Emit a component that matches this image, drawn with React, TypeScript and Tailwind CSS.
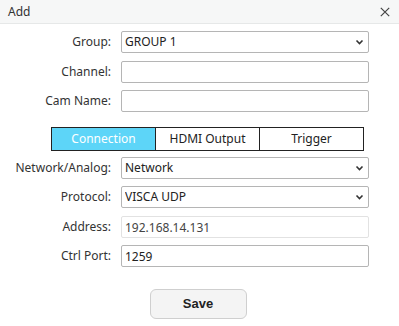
import { useState } from 'react';

const font = { fontFamily: '"Noto Sans", "Open Sans", sans-serif' };

function Chevron() {
  return (
    <svg
      className="pointer-events-none absolute right-[5px] top-1/2 -translate-y-1/2"
      width="9"
      height="6"
      viewBox="0 0 9 6"
    >
      <path d="M1.5 1.5 L4.5 4.5 L7.5 1.5" fill="none" stroke="#333" strokeWidth="1.6" />
    </svg>
  );
}

function Row({ label, children, className = '' }: { label: string; children: React.ReactNode; className?: string }) {
  return (
    <div className={`flex items-center ${className}`}>
      <label className="w-[111px] text-right text-[12px] text-[#333]">{label}</label>
      <div className="relative ml-[10px] w-[248px]">{children}</div>
    </div>
  );
}

const boxCls =
  'block h-[22px] w-full rounded-[2px] border border-[#b5b5b5] bg-white px-[3px] text-[12px] text-[#222] outline-none';

export default function App() {
  const [tab, setTab] = useState('Connection');
  const tabs = ['Connection', 'HDMI Output', 'Trigger'];

  return (
    <div className="h-[326px] w-[399px] bg-white" style={font}>
      {/* Title bar */}
      <div className="flex h-[24px] items-center justify-between border-b border-[#e6e8e8] bg-[#f6f7f7] pl-[8px] pr-[9px]">
        <span className="text-[12px] text-[#333]">Add</span>
        <svg width="10" height="10" viewBox="0 0 10 10">
          <path d="M0.8 0.8 L9.2 9.2 M9.2 0.8 L0.8 9.2" stroke="#444" strokeWidth="1.2" />
        </svg>
      </div>

      <div className="flex flex-col">
        <Row label="Group:" className="mt-[7px]">
          <select className={`${boxCls} appearance-none`} defaultValue="GROUP 1">
            <option>GROUP 1</option>
          </select>
          <Chevron />
        </Row>
        <Row label="Channel:" className="mt-[8px]">
          <input className={boxCls} />
        </Row>
        <Row label="Cam Name:" className="mt-[7px]">
          <input className={boxCls} />
        </Row>

        {/* Tabs */}
        <div className="ml-[51px] mt-[15px] flex h-[24px] w-[313px] border border-[#222]">
          {tabs.map((t, i) => (
            <button
              key={t}
              onClick={() => setTab(t)}
              className={`flex-1 text-[12px] ${i > 0 ? 'border-l border-[#222]' : ''} ${
                tab === t ? 'bg-[#5dd5f8] text-white' : 'bg-white text-[#222]'
              }`}
            >
              {t}
            </button>
          ))}
        </div>

        <Row label="Network/Analog:" className="mt-[6px]">
          <select className={`${boxCls} appearance-none`} defaultValue="Network">
            <option>Network</option>
            <option>Analog</option>
          </select>
          <Chevron />
        </Row>
        <Row label="Protocol:" className="mt-[7px]">
          <select className={`${boxCls} appearance-none`} defaultValue="VISCA UDP">
            <option>VISCA UDP</option>
          </select>
          <Chevron />
        </Row>
        <Row label="Address:" className="mt-[8px]">
          <input
            className={`${boxCls} border-[#e2e2e2] bg-[#f3f4f4] text-[#444]`}
            value="192.168.14.131"
            disabled
          />
        </Row>
        <Row label="Ctrl Port:" className="mt-[7px]">
          <input className={boxCls} defaultValue="1259" />
        </Row>

        <div className="mt-[22px] flex justify-center">
          <button
            className="ml-[-3px] h-[30px] w-[97px] rounded-[6px] border border-[#cfcfcf] bg-[#f4f4f4] text-[13px] font-bold text-[#222]"
            style={{ fontFamily: '"Liberation Sans", Arial, sans-serif' }}
          >
            Save
          </button>
        </div>
      </div>
    </div>
  );
}
